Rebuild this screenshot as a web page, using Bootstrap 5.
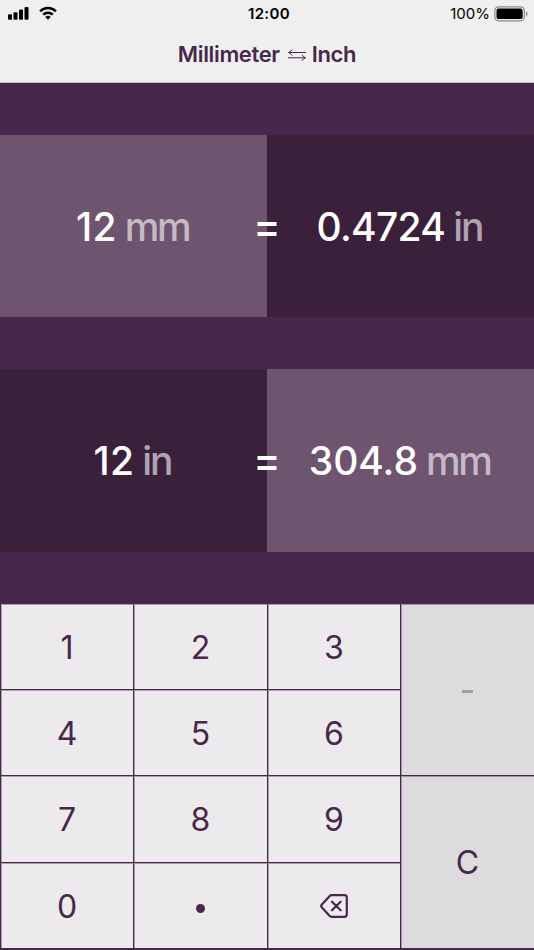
<!DOCTYPE html>
<html lang="en">
<head>
<meta charset="utf-8">
<meta name="viewport" content="width=device-width, initial-scale=1">
<title>Millimeter to Inch</title>
<link href="https://cdn.jsdelivr.net/npm/bootstrap@5.3.0/dist/css/bootstrap.min.css" rel="stylesheet">
<style>
:root{--plum:#48284a;--plum-dark:#3b203b;--plum-light:#6e546e;--key:#eceaed;--key-side:#dddbde}
body{font-family:Inter,"Liberation Sans",sans-serif;background:var(--plum);width:534px;height:950px;overflow:hidden}
.top-area{height:83px;background:#efefef;border-bottom:1px solid #c4bdc4}
.status-bar{height:27px;color:#000;font-size:15px;line-height:27px}
.clock{font-weight:600;letter-spacing:.35px;padding-left:4px}
.screen-title{height:55px;color:var(--plum);font-size:22px;font-weight:560;line-height:55px;letter-spacing:-.35px}
.converter{height:521px;padding:51.5px 0 52.5px}
.pair{height:182.5px}
.tone-light{background:var(--plum-light)}
.tone-dark{background:var(--plum-dark)}
.amount{font-size:39px;font-weight:550;color:#fff;white-space:pre;line-height:1;padding:2px 2px 0 0}
.second-pair .amount{padding-top:0}
.unit{color:rgba(255,255,255,.6);letter-spacing:-2px;margin-left:8px}
.unit-mm{letter-spacing:-2.5px}
.num-wide{letter-spacing:.3px}
.num-tight{letter-spacing:-.7px}
.equals{width:19px;height:14px;margin-top:3px;border-top:4px solid #fff;border-bottom:4px solid #fff}
.keypad{display:grid;grid-template-columns:132px 133px 132px 1fr;grid-template-rows:85px 85px 86px 85px;gap:1px;padding-left:1px}
.key{background:var(--key);color:var(--plum);border:0;border-radius:0;padding:2px 0 0;font-size:32px;line-height:1;box-shadow:inset 1px 1px rgba(72,40,74,.4)}
.side-key{background:var(--key-side);grid-column:4}
.side-top{grid-row:1/3}
.side-bottom{grid-row:3/5}
.minus{width:11px;height:3px;margin-top:1px;background:#a19da2}
.point{width:9px;height:9px;background:var(--plum)}
</style>
</head>
<body>
<header class="top-area">
  <div class="status-bar row g-0">
    <div class="col-4 d-flex align-items-center ps-2">
      <svg width="50" height="16" viewBox="0 0 50 16"><rect y="8.2" width="4" height="5.6" rx="1"/><rect x="5.5" y="6.2" width="4" height="7.6" rx="1"/><rect x="11" y="3.6" width="4" height="10.2" rx="1"/><rect x="16.5" y="1" width="4" height="12.8" rx="1"/><g fill="none" stroke="#000" stroke-width="2.5"><path d="M32.1 5.3a11.3 11.3 0 0 1 15.8 0"/><path d="M35.2 8.7a7 7 0 0 1 9.6 0"/></g><path d="M37.3 11a4 4 0 0 1 5.4 0L40 13.8z"/></svg>
    </div>
    <div class="col-4 text-center clock">12:00</div>
    <div class="col-4 d-flex align-items-center justify-content-end">
      <span class="battery-text">100%</span>
      <svg class="ms-1 me-1" width="36" height="16" viewBox="0 0 36 16"><rect x=".8" y=".8" width="29.6" height="14" rx="3.8" fill="none" stroke="#8b8b8b" stroke-width="1.2"/><rect x="2.5" y="2.5" width="26.2" height="10.6" rx="2.2"/><path d="M32 5.3q1.6.6 1.6 2.5T32 10.3z" fill="#8b8b8b"/></svg>
    </div>
  </div>
  <div class="screen-title d-flex justify-content-center align-items-center">
    <span>Millimeter</span>
    <svg class="ms-2 me-1" width="20" height="14" viewBox="0 0 20 14" fill="none" stroke="#48284a" stroke-width="1"><path d="M18 4.5H.8M4 1.5Q2.8 3.9.5 4.5Q2.8 5.1 4 7.5M0 9.8h17.2M14 6.8q1.2 2.4 3.5 3Q15.2 10.4 14 12.8"/></svg>
    <span>Inch</span>
  </div>
</header>
<main class="converter d-flex flex-column justify-content-between">
  <section class="pair d-flex position-relative">
    <div class="tone-light w-50 d-flex align-items-center justify-content-center"><div class="amount"><span class="num-wide">12</span><span class="unit unit-mm">mm</span></div></div>
    <div class="tone-dark w-50 d-flex align-items-center justify-content-center"><div class="amount"><span class="num-tight">0.4724</span><span class="unit">in</span></div></div>
    <div class="equals position-absolute top-50 start-50 translate-middle" role="img" aria-label="equals"></div>
  </section>
  <section class="pair second-pair d-flex position-relative">
    <div class="tone-dark w-50 d-flex align-items-center justify-content-center"><div class="amount"><span class="num-wide">12</span><span class="unit">in</span></div></div>
    <div class="tone-light w-50 d-flex align-items-center justify-content-center"><div class="amount">304.8<span class="unit unit-mm">mm</span></div></div>
    <div class="equals position-absolute top-50 start-50 translate-middle" role="img" aria-label="equals"></div>
  </section>
</main>
<div class="keypad">
  <button class="key">1</button><button class="key">2</button><button class="key">3</button>
  <button class="key side-key side-top d-flex align-items-center justify-content-center" aria-label="minus"><span class="minus"></span></button>
  <button class="key">4</button><button class="key">5</button><button class="key">6</button>
  <button class="key">7</button><button class="key">8</button><button class="key">9</button>
  <button class="key side-key side-bottom">C</button>
  <button class="key">0</button>
  <button class="key d-flex align-items-center justify-content-center" aria-label="decimal point"><span class="point rounded-circle mt-1"></span></button>
  <button class="key d-flex align-items-center justify-content-center pt-0" aria-label="delete"><svg width="28" height="24" viewBox="0 0 28 24" fill="none" stroke="#48284a" stroke-width="2.2" stroke-linecap="round" stroke-linejoin="round"><path d="M11.5 1.2H24.5Q26.8 1.2 26.8 3.7v16.6q0 2.5-2.3 2.5h-13q-1 0-1.8-.8L1.7 13.2q-1.1-1.2 0-2.4L9.7 2q.8-.8 1.8-.8zM12 7.7l8.6 8.6m0-8.6L12 16.3"/></svg></button>
</div>
<script src="https://cdn.jsdelivr.net/npm/bootstrap@5.3.0/dist/js/bootstrap.bundle.min.js"></script>
</body>
</html>
